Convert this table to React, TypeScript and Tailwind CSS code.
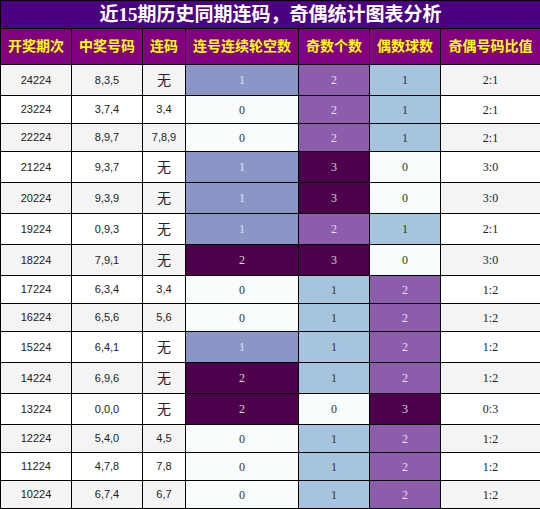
const rows: [string, string, string, number, number, number, string][] = [
  ["24224", "8,3,5", "无", 1, 2, 1, "2:1"],
  ["23224", "3,7,4", "3,4", 0, 2, 1, "2:1"],
  ["22224", "8,9,7", "7,8,9", 0, 2, 1, "2:1"],
  ["21224", "9,3,7", "无", 1, 3, 0, "3:0"],
  ["20224", "9,3,9", "无", 1, 3, 0, "3:0"],
  ["19224", "0,9,3", "无", 1, 2, 1, "2:1"],
  ["18224", "7,9,1", "无", 2, 3, 0, "3:0"],
  ["17224", "6,3,4", "3,4", 0, 1, 2, "1:2"],
  ["16224", "6,5,6", "5,6", 0, 1, 2, "1:2"],
  ["15224", "6,4,1", "无", 1, 1, 2, "1:2"],
  ["14224", "6,9,6", "无", 2, 1, 2, "1:2"],
  ["13224", "0,0,0", "无", 2, 0, 3, "0:3"],
  ["12224", "5,4,0", "4,5", 0, 1, 2, "1:2"],
  ["11224", "4,7,8", "7,8", 0, 1, 2, "1:2"],
  ["10224", "6,7,4", "6,7", 0, 1, 2, "1:2"],
];

const headers = ["开奖期次", "中奖号码", "连码", "连号连续轮空数", "奇数个数", "偶数球数", "奇偶号码比值"];

// heat colours for the count columns
const gapColor: Record<number, string> = {
  0: "bg-[#f7fcfd] text-[#333333]",
  1: "bg-[#8c96c6] text-[#dfe2f0]",
  2: "bg-[#4d004b] text-[#d8d8d8]",
};

const countColor: Record<number, string> = {
  0: "bg-[#f7fcfd] text-[#333333]",
  1: "bg-[#a6c3df] text-[#333333]",
  2: "bg-[#8c5dab] text-[#e8def0]",
  3: "bg-[#4d004b] text-[#d8d8d8]",
};

const sans = "font-['Liberation_Sans','Noto_Sans_CJK_SC',sans-serif]";
const serif = "font-['Liberation_Serif','Noto_Sans_CJK_SC',serif]";

export default function App() {
  return (
    <div className="w-[540px] bg-white">
      <table className="w-[540px] table-fixed border-collapse">
        <colgroup>
          <col className="w-[71px]" />
          <col className="w-[71px]" />
          <col className="w-[43px]" />
          <col className="w-[113px]" />
          <col className="w-[71px]" />
          <col className="w-[71px]" />
          <col className="w-[100px]" />
        </colgroup>
        <thead>
          <tr className="h-[28px]">
            <th
              colSpan={7}
              className={`border border-black bg-[#4b0082] p-0 text-center text-[19px] font-bold leading-none text-white ${serif}`}
            >
              近15期历史同期连码，奇偶统计图表分析
            </th>
          </tr>
          <tr className="h-[36px]">
            {headers.map((h) => (
              <th
                key={h}
                className={`border border-black bg-[#800080] p-0 text-center text-[14px] font-bold text-[#ffff00] ${sans}`}
              >
                {h}
              </th>
            ))}
          </tr>
        </thead>
        <tbody>
          {rows.map((r, i) => {
            const base = i % 2 === 0 ? "bg-[#f4f4f4]" : "bg-white";
            const none = r[2] === "无";
            return (
              <tr key={r[0]} className={none ? "h-[31px]" : "h-[28px]"}>
                <td className={`border border-black p-0 text-center text-[11px] text-[#222222] ${base} ${sans}`}>{r[0]}</td>
                <td className={`border border-black p-0 text-center text-[11px] text-[#222222] ${base} ${sans}`}>{r[1]}</td>
                <td
                  className={`border border-black p-0 text-center text-[#222222] ${base} ${sans} ${
                    none ? "text-[14px]" : "text-[11px]"
                  }`}
                >
                  {r[2]}
                </td>
                <td className={`border border-black p-0 text-center text-[12px] ${gapColor[r[3]]} ${serif}`}>{r[3]}</td>
                <td className={`border border-black p-0 text-center text-[12px] ${countColor[r[4]]} ${serif}`}>{r[4]}</td>
                <td className={`border border-black p-0 text-center text-[12px] ${countColor[r[5]]} ${serif}`}>{r[5]}</td>
                <td className={`border border-black p-0 text-center text-[12px] text-[#222222] ${base} ${serif}`}>{r[6]}</td>
              </tr>
            );
          })}
        </tbody>
      </table>
    </div>
  );
}
